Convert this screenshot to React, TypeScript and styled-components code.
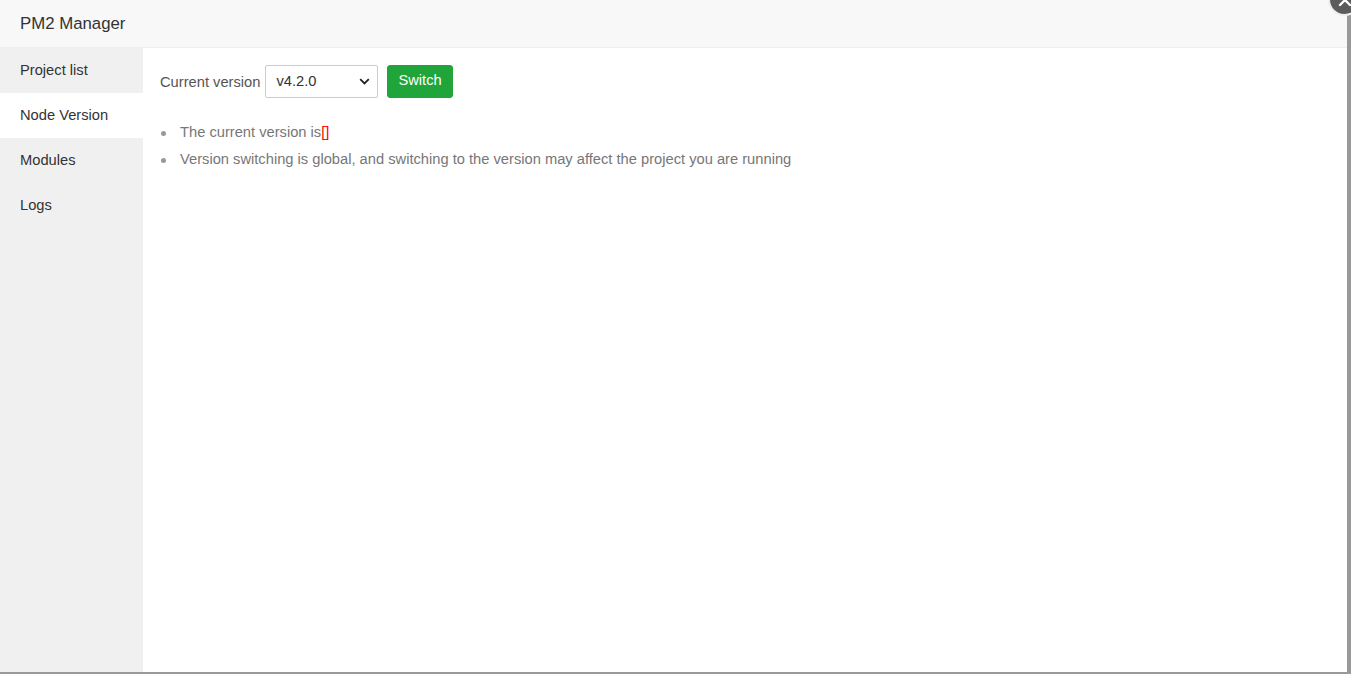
import React, { useState } from "react";
import styled, { createGlobalStyle } from "styled-components";

const GlobalStyle = createGlobalStyle`
  html, body {
    margin: 0;
    padding: 0;
    background: #999999;
    overflow: hidden;
  }
  * {
    box-sizing: border-box;
  }
`;

const Modal = styled.div`
  position: relative;
  width: 1347px;
  height: 672px;
  background: #fff;
  display: flex;
  flex-direction: column;
  font-family: "Liberation Sans", Arial, sans-serif;
  font-size: 14.7px;
  color: #333;
`;

const Header = styled.div`
  height: 48px;
  flex-shrink: 0;
  background: #f8f8f8;
  border-bottom: 1px solid #eee;
  padding-left: 20px;
  display: flex;
  align-items: center;
  font-size: 16.8px;
  color: #333;
`;

const CloseButton = styled.button`
  position: absolute;
  top: -17px;
  left: 1328px;
  width: 33px;
  height: 33px;
  border-radius: 50%;
  background: #5c5c5c;
  border: 2px solid #eee;
  padding: 0;
  display: flex;
  align-items: center;
  justify-content: center;
  cursor: pointer;
`;

const Body = styled.div`
  flex: 1;
  display: flex;
  min-height: 0;
`;

const Sidebar = styled.ul`
  width: 143px;
  flex-shrink: 0;
  margin: 0;
  padding: 0;
  list-style: none;
  background: #f0f0f0;
`;

const NavItem = styled.li<{ $active?: boolean }>`
  height: 45px;
  line-height: 45px;
  padding-left: 20px;
  color: #333;
  cursor: pointer;
  background: ${(p) => (p.$active ? "#fff" : "transparent")};
`;

const Content = styled.div`
  flex: 1;
  padding: 17px 17px;
`;

const Toolbar = styled.div`
  display: flex;
  align-items: center;
  height: 33px;
`;

const Label = styled.span`
  color: #555;
  margin-right: 5px;
`;

const SelectBox = styled.div`
  position: relative;
  width: 113px;
  height: 33px;
  border: 1px solid #ccc;
  border-radius: 2px;
  background: #fff;
  display: flex;
  align-items: center;
  padding-left: 10px;
  color: #333;
  margin-right: 9px;
  padding-bottom: 2px;
`;

const Arrow = styled.svg`
  position: absolute;
  right: 7px;
  top: 12px;
`;

const SwitchButton = styled.button`
  height: 33px;
  padding: 0 10px;
  background: #20a53a;
  border: 1px solid #20a53a;
  border-radius: 3px;
  color: #fff;
  font-family: "Liberation Sans", Arial, sans-serif;
  font-size: 14.7px;
  font-weight: 500;
  padding-bottom: 3px;
  cursor: pointer;
`;

const Notes = styled.ul`
  margin: 21px 0 0;
  padding: 0;
  list-style: none;
  color: #777;
  line-height: 27px;
`;

const Note = styled.li`
  position: relative;
  padding-left: 20px;

  &::before {
    content: "";
    position: absolute;
    left: 1px;
    top: 12px;
    width: 5px;
    height: 5px;
    border-radius: 50%;
    background: #999;
  }
`;

const Warn = styled.span`
  color: red;
`;

const navItems = ["Project list", "Node Version", "Modules", "Logs"];

export default function App() {
  const [active, setActive] = useState(1);
  return (
    <>
      <GlobalStyle />
      <Modal>
        <Header>PM2 Manager</Header>
        <CloseButton aria-label="close">
          <svg width="14" height="14" viewBox="0 0 14 14">
            <path d="M2 2L12 12M12 2L2 12" stroke="#fff" strokeWidth="2.4" strokeLinecap="round" />
          </svg>
        </CloseButton>
        <Body>
          <Sidebar>
            {navItems.map((item, i) => (
              <NavItem key={item} $active={i === active} onClick={() => setActive(i)}>
                {item}
              </NavItem>
            ))}
          </Sidebar>
          <Content>
            <Toolbar>
              <Label>Current version</Label>
              <SelectBox>
                v4.2.0
                <Arrow width="11" height="7" viewBox="0 0 11 7">
                  <path d="M1.2 1.2L5.5 5.5L9.8 1.2" stroke="#222" strokeWidth="1.8" fill="none" />
                </Arrow>
              </SelectBox>
              <SwitchButton>Switch</SwitchButton>
            </Toolbar>
            <Notes>
              <Note>
                The current version is<Warn>[]</Warn>
              </Note>
              <Note>Version switching is global, and switching to the version may affect the project you are running</Note>
            </Notes>
          </Content>
        </Body>
      </Modal>
    </>
  );
}
